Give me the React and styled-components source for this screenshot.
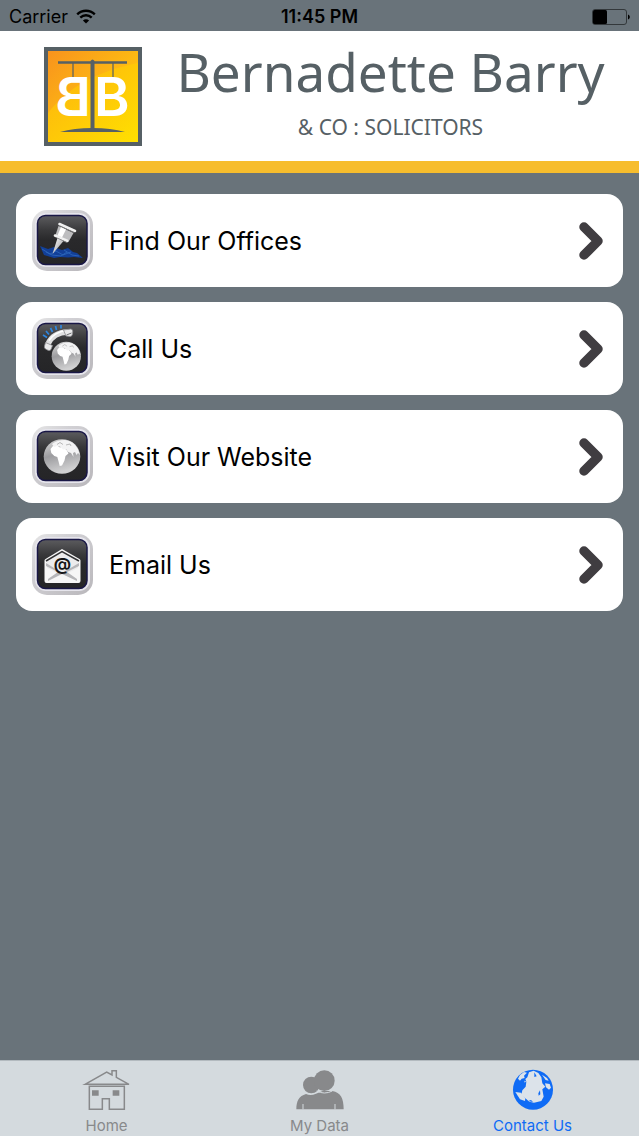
import React from "react";
import styled, { createGlobalStyle } from "styled-components";

const GlobalStyle = createGlobalStyle`
    * {
        box-sizing: border-box;
    }

    body {
        margin: 0;
        background-color: #69737a;
        font-family: Inter, "Liberation Sans", sans-serif;
    }
`;

const Screen = styled.div`
    min-height: 100vh;
    display: flex;
    flex-direction: column;
    background-color: #69737a;
`;

const StatusBar = styled.div`
    display: grid;
    grid-template-columns: 1fr auto 1fr;
    align-items: center;
    height: 31px;
    padding: 2px 9px 0;
    color: #000;
    font-size: 18px;
    line-height: 28px;

    svg {
        display: block;
    }
`;

const StatusLeft = styled.div`
    display: flex;
    align-items: center;
    gap: 8px;
`;

const StatusTime = styled.span`
    font-weight: 600;
`;

const StatusRight = styled.div`
    display: flex;
    justify-content: flex-end;
`;

const Header = styled.header`
    display: flex;
    align-items: flex-start;
    padding: 16px 0 15px 43px;
    background-color: #fff;
    border-bottom: 12px solid #f7bd2d;
`;

const Brand = styled.div`
    flex: 1;
    display: flex;
    flex-direction: column;
    align-items: center;
    color: #566065;
    font-family: "Noto Sans", "Open Sans", sans-serif;
    text-align: center;
`;

const BrandName = styled.h1`
    margin: 0;
    font-size: 53px;
    font-weight: 400;
    line-height: 50px;
    white-space: nowrap;
`;

const BrandSub = styled.p`
    margin: 16px 0 0;
    font-size: 21px;
    line-height: 28px;
`;

const Menu = styled.ul`
    flex: 1;
    display: flex;
    flex-direction: column;
    gap: 15px;
    margin: 0;
    padding: 21px 16px;
    list-style: none;
`;

const MenuLink = styled.a`
    display: flex;
    align-items: center;
    gap: 16px;
    height: 93px;
    padding: 0 19px 0 16px;
    border-radius: 16px;
    background-color: #fff;
    color: #000;
    font-size: 25px;
    line-height: 32px;
    text-decoration: none;

    span {
        flex: 1;
    }
`;

const TabBar = styled.nav`
    display: grid;
    grid-template-columns: repeat(3, 1fr);
    height: 76px;
    background-color: #d4dade;
    border-top: 1px solid #b3babf;
`;

const Tab = styled.a`
    display: flex;
    flex-direction: column;
    align-items: center;
    gap: 4px;
    padding-top: 7px;
    color: ${(props) => (props.$active ? "#0f6bf5" : "#88898b")};
    font-size: 15px;
    line-height: 20px;
    text-decoration: none;
`;

const WifiIcon = () => (
    <svg width="20" height="15" viewBox="0 0 20 15" fill="none" stroke="#000" strokeWidth="2.4">
        <path d="M1.2 5.4C6.2 .6 13.8 .6 18.8 5.4" />
        <path d="M4.3 8.6c3.3-3.1 8.1-3.1 11.4 0" />
        <path d="M10 14.6 6.9 11.5c1.8-1.6 4.4-1.6 6.2 0z" fill="#000" stroke="none" />
    </svg>
);

const BatteryIcon = () => (
    <svg width="38" height="16" viewBox="0 0 38 16">
        <rect x=".5" y=".5" width="34" height="15" rx="2.5" fill="none" stroke="#33383b" />
        <rect x="1" y="1" width="14" height="14" rx="1.5" fill="#000" />
        <path d="M36 5.5c2.4.8 2.4 4.2 0 5z" fill="#000" />
    </svg>
);

const Logo = () => (
    <svg width="99" height="99" viewBox="0 0 99 99" role="img" aria-label="Bernadette Barry and Co">
        <defs>
            <linearGradient id="logoGold" x1="0" y1="0" x2="1" y2="1">
                <stop offset="0" stopColor="#f8931d" />
                <stop offset=".5" stopColor="#fdb813" />
                <stop offset="1" stopColor="#ffdc00" />
            </linearGradient>
            <linearGradient id="logoShine" x1="0" y1="0" x2="1" y2="1">
                <stop offset="0" stopColor="#fdb010" />
                <stop offset="1" stopColor="#ffe000" />
            </linearGradient>
        </defs>
        <rect x="1" y="0" width="98" height="99" fill="#566065" />
        <rect x="5" y="4" width="90" height="91" fill="url(#logoGold)" />
        <path d="M5 66C25 40 55 24 95 16v79H5z" fill="url(#logoShine)" />
        <path d="M30 16v15M70 16v15" stroke="#566065" strokeWidth="1.2" />
        <path d="M15 15.5H84" stroke="#566065" strokeWidth="2.4" />
        <path d="M47.5 14q2-3 4 0v68h-4z" fill="#566065" />
        <path d="M17 85q14-4 32.5-4T82 85z" fill="#566065" />
        <g fill="#fff" fontFamily="Inter, sans-serif" fontWeight="600" fontSize="54">
            <text x="51" y="69">B</text>
            <text x="-48" y="69" transform="scale(-1 1)">B</text>
        </g>
    </svg>
);

const ChevronIcon = () => (
    <svg width="26" height="40" viewBox="0 0 26 40" fill="none">
        <path
            d="M6 6 20 20 6 34"
            stroke="#403d41"
            strokeWidth="9.5"
            strokeLinecap="round"
            strokeLinejoin="round"
        />
    </svg>
);

const Tile = ({ id, children }) => (
    <svg width="61" height="61" viewBox="0 0 61 61" aria-hidden="true">
        <defs>
            <linearGradient id={`${id}Rim`} x1="0" y1="0" x2="1" y2="1">
                <stop offset="0" stopColor="#e6e6e6" />
                <stop offset=".3" stopColor="#d2d1d5" />
                <stop offset="1" stopColor="#b9b7bb" />
            </linearGradient>
            <linearGradient id={`${id}Face`} x1="0" y1="0" x2="0" y2="1">
                <stop offset="0" stopColor="#5c5c5f" />
                <stop offset=".3" stopColor="#39393b" />
                <stop offset=".5" stopColor="#29292b" />
                <stop offset="1" stopColor="#252527" />
            </linearGradient>
            <linearGradient id={`${id}Metal`} x1="0" y1="0" x2="1" y2="1">
                <stop offset="0" stopColor="#fff" />
                <stop offset=".55" stopColor="#c4c4c6" />
                <stop offset="1" stopColor="#ededee" />
            </linearGradient>
        </defs>
        <rect x="0" y="0" width="61" height="61" rx="15" fill={`url(#${id}Rim)`} />
        <rect x="3" y="3" width="55" height="54" rx="11" fill="#e6e5ec" />
        <rect x="5.5" y="5.5" width="49.5" height="49" rx="8" fill={`url(#${id}Face)`} stroke="#191746" strokeWidth="1.5" />
        {children}
    </svg>
);

const Globe = ({ id }) => (
    <>
        <defs>
            <linearGradient id={`${id}Ocean`} x1="0" y1="0" x2=".3" y2="1">
                <stop offset="0" stopColor="#dcdcdc" />
                <stop offset=".5" stopColor="#9c9c9f" />
                <stop offset="1" stopColor="#d0d0d1" />
            </linearGradient>
        </defs>
        <ellipse cx="30" cy="30.5" rx="18.3" ry="17.2" fill={`url(#${id}Ocean)`} />
        <path d="M18.5 23l2.5-3 4-.5 3 2 3-1 4 4 1.500 3-3 2.500-1 4.500-2.500 5-2.300.6-1-4-1.400-5-3-1-3-3z" fill="#fff" />
        <path d="M20 18q5-4 13-4 9 1 13 9l2 6-2-2-1.500 2-1.500-3-2 1 .5 4-2.500-4-3-1-2-3-3 .5-3-3-3-.5-3 1z" fill="#f3f3f4" />
        <path d="M25 18.5l3-2 3 2M34 19l4-1 1 2" fill="none" stroke="#aaa" strokeWidth=".8" />
    </>
);

const PinTile = () => (
    <Tile id="pin">
        <path d="M8 36l8 3 6-2 8 3 6-2 5 4 4 1 6 5-9-1-6 .5-8-.5-6 1-10-3z" fill="#123f98" />
        <path d="M10 39l8 5 6-3 7 4 8-3M14 42l6 3 9 1 6-4M32 40l8 5 7 1" fill="none" stroke="#2f69bd" strokeWidth=".8" />
        <path d="M25.5 28l6 3L20.5 44z" fill="url(#pinMetal)" />
        <path d="M26.5 16l15 7-4.5 8-13.5-6z" fill="#bdbdbf" />
        <path d="M29 17l5 2.5-4 8-4.5-2z" fill="#fff" />
        <path d="M27.5 14 43 21M23 25.5 35.5 31" stroke="#f1f1f1" strokeWidth="2.6" strokeLinecap="round" />
        <path d="M28 16l14 6.5M24 27.5l11 5" stroke="#858587" strokeWidth=".8" />
    </Tile>
);

const PhoneTile = () => (
    <Tile id="phone">
        <g transform="translate(10.3 12.7) scale(.8 .84)">
            <Globe id="phone" />
        </g>
        <path d="M11 17l4 2.5M14 13l3 3.5M18.5 10l2 4M23.5 8l1 4M29 7v3.5" stroke="#2e86e0" strokeWidth="1.7" />
        <path d="M16 26Q21 14.5 36 14" fill="none" stroke="#dfdfe0" strokeWidth="5.5" />
        <path d="M17 22.5Q23 13.5 35 12.5" fill="none" stroke="#fff" strokeWidth="1.5" />
        <path d="M13.5 24.5 20.5 27.5 19 31.5q-1 1.500-3 .8l-2.500-1.300q-1.500-1-1-3z" fill="#e9e9ea" stroke="#8c8c8f" strokeWidth=".8" />
        <path d="M31.5 12 38.5 11q2 0 2.200 2l-.2 3q-.5 2.500-2.500 2.500l-4-.5z" fill="#e9e9ea" stroke="#8c8c8f" strokeWidth=".8" />
        <path d="M34.5 17l5-2" stroke="#707073" />
    </Tile>
);

const WebTile = () => (
    <Tile id="web">
        <Globe id="web" />
    </Tile>
);

const MailTile = () => (
    <Tile id="mail">
        <path d="M12.5 26.5Q12.5 25.5 13.5 25L30 15l17.5 10q1 .5 1 1.5V47q0 2-2 2h-32q-2 0-2-2z" fill="#f6f6f6" />
        <path d="M15 27 30 18.5 46 27v7l-12 6h-7l-12-6z" fill="#ececed" />
        <path d="M14 27 30 17.5 47 27" fill="none" stroke="#333335" strokeWidth="1.5" />
        <path d="M14 32l12 6-10 7v2l14-7 15 7v-2l-10-7 12-6v-3L30 39 14 29z" fill="#b6b6b9" />
        <text x="30.5" y="35.5" textAnchor="middle" fontFamily="Inter, sans-serif" fontSize="17" fontWeight="700" fill="#161617">@</text>
    </Tile>
);

const HomeIcon = () => (
    <svg width="50" height="44" viewBox="64 53 150 132" fill="none" stroke="currentColor" strokeWidth="4.5">
        <path d="M73 102 138 65l16 9V61h13v20l38 21z" />
        <path d="M86 108v69h39v-32h21v32h45v-69z" />
        <path d="M94 120h20v16H94zM156 120h20v16h-20z" fill="currentColor" stroke="none" />
    </svg>
);

const PeopleIcon = () => (
    <svg width="50" height="44" viewBox="73 53 150 132" fill="currentColor">
        <circle cx="122" cy="104" r="25" />
        <path d="M77 177c0-25 8-40 29-46q14 7 30-1l20-8 29 0c25 4 34 22 34 55z" />
        <path d="M97 161v16M193 161v16" stroke="#d4dade" strokeWidth="3" />
        <path d="M138 122q23 12 47 0" fill="none" stroke="#d4dade" strokeWidth="3" />
        <circle cx="161" cy="91" r="31" />
    </svg>
);

const EarthIcon = () => (
    <svg width="50" height="44" viewBox="-3 9 150 132">
        <circle cx="72" cy="74" r="60" fill="currentColor" />
        <g fill="#dce3ea">
            <path d="M55 37l5-15 14-5 14 7 9 13 3 18 9 10-9 8 4 22-7 13-22 5-14-3-12-10-12-11 3-13 10-11 2-15-3-8z" />
            <path d="M27 41l6-11 12-9 9 2-9 9 2 7-9 2-5 6zM46 47l5 2-4 4z" />
            <path d="M19 81l17 2 13 17-1 8-15-5z" />
            <path d="M99 29l15 10 5 8-9-2zM108 55l14 2 4 11-6 6-9-7z" />
        </g>
        <path d="M76 22l7 12-7 2zM88 85l5-9 1 12-5 4zM58 108l8-3 6 6z" fill="currentColor" />
    </svg>
);

const menuItems = [
    { label: "Find Our Offices", href: "#offices", Icon: PinTile },
    { label: "Call Us", href: "#call", Icon: PhoneTile },
    { label: "Visit Our Website", href: "#website", Icon: WebTile },
    { label: "Email Us", href: "#email", Icon: MailTile },
];

const App = () => {
    return (
        <Screen>
            <GlobalStyle />
            <StatusBar>
                <StatusLeft><span>Carrier</span><WifiIcon /></StatusLeft>
                <StatusTime>11:45 PM</StatusTime>
                <StatusRight><BatteryIcon /></StatusRight>
            </StatusBar>
            <Header>
                <Logo />
                <Brand>
                    <BrandName>Bernadette Barry</BrandName>
                    <BrandSub>&amp; CO : SOLICITORS</BrandSub>
                </Brand>
            </Header>
            <Menu>
                {menuItems.map(({ label, href, Icon }) => (
                    <li key={label}>
                        <MenuLink href={href}>
                            <Icon />
                            <span>{label}</span>
                            <ChevronIcon />
                        </MenuLink>
                    </li>
                ))}
            </Menu>
            <TabBar>
                <Tab href="#home"><HomeIcon />Home</Tab>
                <Tab href="#data"><PeopleIcon />My Data</Tab>
                <Tab href="#contact" $active aria-current="page"><EarthIcon />Contact Us</Tab>
            </TabBar>
        </Screen>
    );
};

export default App;
